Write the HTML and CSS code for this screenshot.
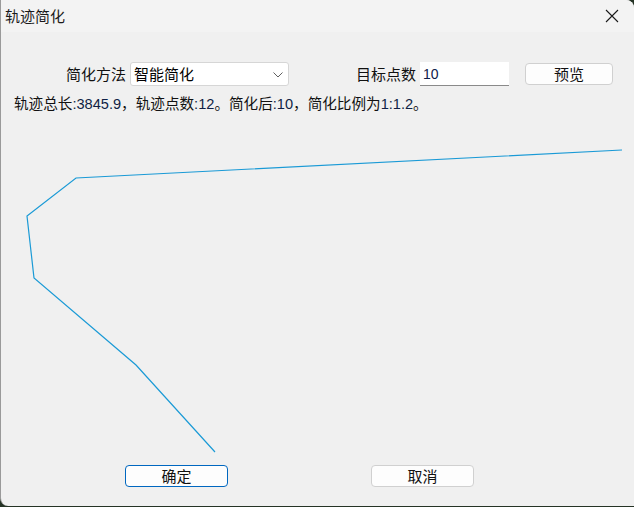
FILE: index.html
```html
<!DOCTYPE html>
<html lang="zh-CN">
<head>
<meta charset="utf-8">
<title>轨迹简化</title>
<link rel="stylesheet" href="styles.css">
</head>
<body>
<div class="window">
  <div class="titlebar">
    <span class="title">轨迹简化</span>
    <svg class="close" width="14" height="14" viewBox="0 0 14 14"><path d="M1 1 L13 13 M13 1 L1 13" stroke="#1a1a1a" stroke-width="1.1" fill="none"/></svg>
  </div>
  <div class="controls">
    <span class="label">简化方法</span>
    <div class="combo">
      <span class="combo-text">智能简化</span>
      <svg class="chev" width="10" height="6" viewBox="0 0 10 6"><path d="M0.5 0.5 L5 5 L9.5 0.5" stroke="#606060" stroke-width="1" fill="none"/></svg>
    </div>
    <span class="label label2">目标点数</span>
    <div class="input"><span class="input-text">10</span></div>
    <div class="btn btn-preview">预览</div>
  </div>
  <div class="status">轨迹总长<span class="num">:3845.9</span>，轨迹点数<span class="num">:12</span>。简化后<span class="num">:10</span>，简化比例为<span class="num">1:1.2</span>。</div>
  <svg class="canvas" width="634" height="348" viewBox="0 0 634 348">
    <polyline points="214,340 135,253 33,166 26,104 75,66 621,38" fill="none" stroke="#1a9ad6" stroke-width="1.2"/>
  </svg>
  <div class="footer">
    <div class="btn btn-ok">确定</div>
    <div class="btn btn-cancel">取消</div>
  </div>
</div>
</body>
</html>
```
FILE: styles.css
```css
html, body {
  margin: 0;
  padding: 0;
}
body {
  background: #253325;
  width: 634px;
  height: 507px;
  overflow: hidden;
  font-family: "Noto Sans CJK SC", "Liberation Sans", sans-serif;
  color: #000;
}
.window {
  width: 634px;
  height: 506px;
  background: #f0f0f0;
  border-radius: 0 8px 0 8px;
  overflow: hidden;
  display: flex;
  flex-direction: column;
  box-sizing: border-box;
  border-left: 1px solid #9a9a9a;
}
.titlebar {
  height: 32px;
  flex: none;
  background: #f3f3f3;
  display: flex;
  align-items: center;
  justify-content: space-between;
  padding: 0 15px 0 4px;
}
.title {
  font-size: 15px;
  line-height: 20px;
  color: #1a1a1a;
}
.close {
  display: block;
}
.controls {
  margin-top: 30px;
  height: 24px;
  display: flex;
  align-items: center;
  padding-left: 65px;
  font-size: 15px;
}
.label {
  line-height: 20px;
  width: 60px;
  white-space: nowrap;
  color: #111;
}
.combo {
  margin-left: 4px;
  width: 159px;
  height: 24px;
  box-sizing: border-box;
  background: #fff;
  border: 1px solid #d6d6d6;
  border-radius: 3px;
  display: flex;
  align-items: center;
  justify-content: space-between;
  padding: 0 5px 0 3px;
}
.combo-text {
  line-height: 20px;
}
.chev {
  display: block;
  margin-top: 1px;
}
.label2 {
  margin-left: 67px;
}
.input {
  margin-left: 4px;
  width: 89px;
  height: 24px;
  box-sizing: border-box;
  background: #fff;
  border-bottom: 1px solid #8a8a8a;
  display: flex;
  align-items: center;
  padding-left: 3px;
}
.input-text {
  font-family: "Liberation Sans", sans-serif;
  font-size: 14px;
  color: #10204a;
}
.btn {
  box-sizing: border-box;
  background: #fdfdfd;
  border: 1px solid #d0d0d0;
  border-radius: 4px;
  display: flex;
  align-items: center;
  justify-content: center;
  font-size: 15px;
  line-height: 20px;
  color: #111;
}
.btn-preview {
  margin-left: 16px;
  width: 88px;
  height: 22px;
}
.status {
  margin-top: 8px;
  padding-left: 13px;
  font-size: 14.6px;
  line-height: 18px;
  height: 18px;
  white-space: nowrap;
  color: #111;
}
.num {
  font-family: "Liberation Sans", sans-serif;
  color: #0f1f45;
}
.canvas {
  display: block;
  flex: none;
}
.footer {
  margin-top: 5px;
  display: flex;
  padding-left: 124px;
}
.btn-ok {
  width: 103px;
  height: 22px;
  border-color: #0067c0;
}
.btn-cancel {
  margin-left: 143px;
  width: 103px;
  height: 22px;
}
```
